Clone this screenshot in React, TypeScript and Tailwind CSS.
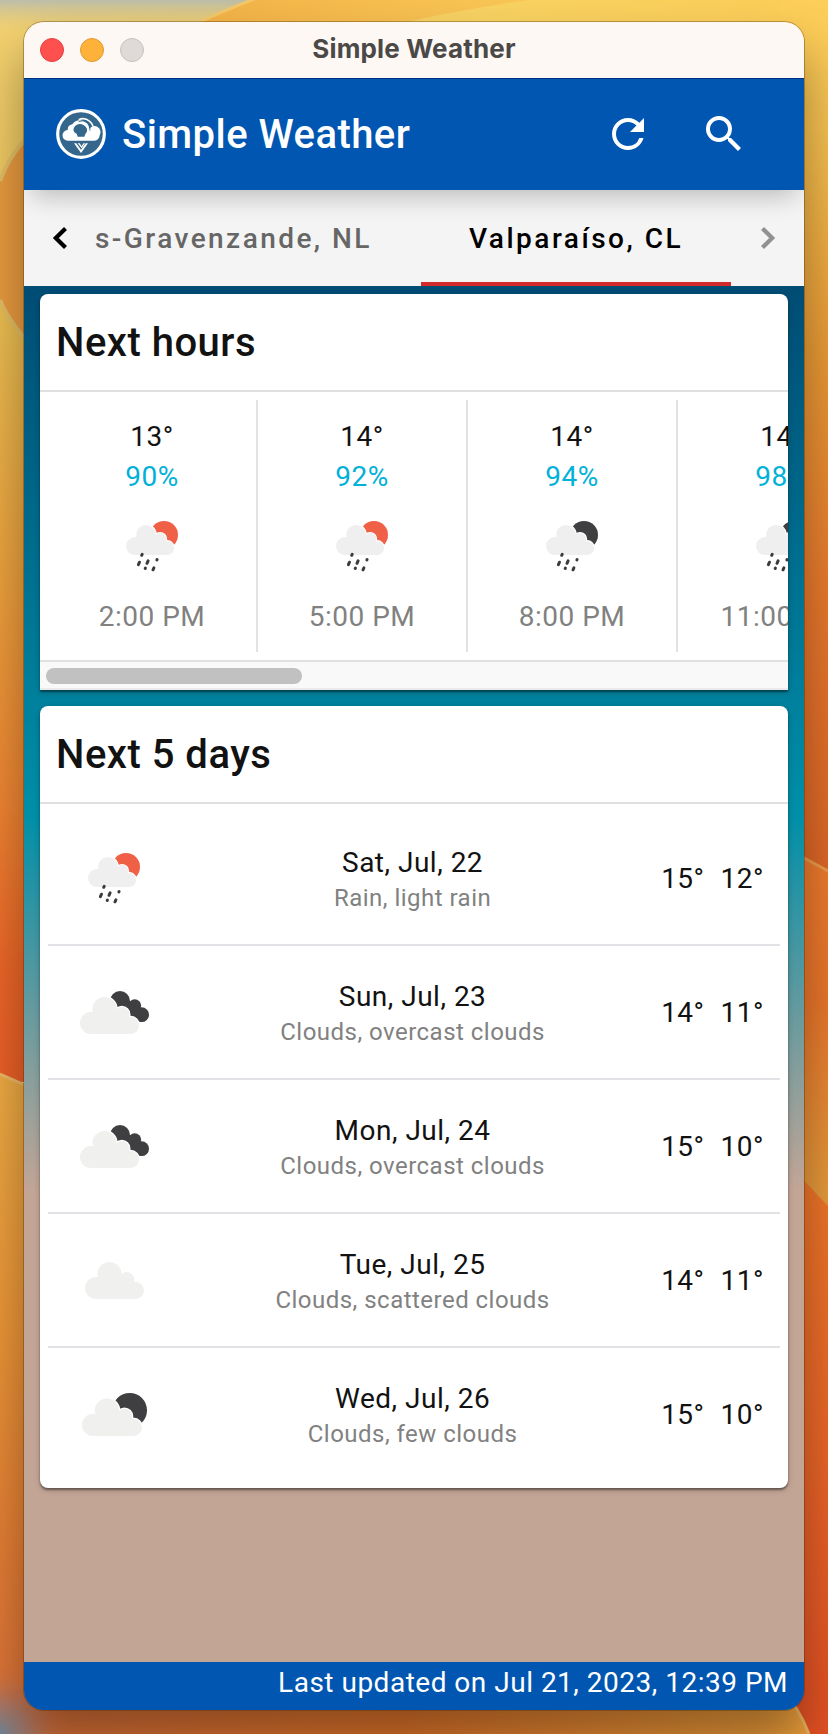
import React from "react";
import { MdRefresh, MdSearch } from "react-icons/md";

type IconKind = "rain-day" | "rain-night" | "overcast" | "scattered" | "few-night";

const CLOUD = [
  "M16 61a11 11 0 1 0 22 0a11 11 0 1 0 -22 0Z",
  "M28.5 47a12 12 0 1 0 24 0a12 12 0 1 0 -24 0Z",
  "M50.3 52.5a7.5 7.5 0 1 0 15 0a7.5 7.5 0 1 0 -15 0Z",
  "M58 63.5a8.5 8.5 0 1 0 17 0a8.5 8.5 0 1 0 -17 0Z",
  "M27 72L66.5 72L65 54L50 47L29 51Z",
].join("");

function WeatherIcon({ kind }: { kind: IconKind }) {
  const dark = "#3f3f41";
  return (
    <svg className="size-[100px] shrink-0" viewBox="0 0 100 100">
      {(kind === "rain-day" || kind === "rain-night") && (
        <>
          <circle cx="62" cy="39" r="14" fill={kind === "rain-day" ? "#ef6046" : dark} />
          <path
            d={CLOUD}
            transform="translate(11 0.4) scale(0.814)"
            fill="#efefef"
            stroke="#fff"
            strokeWidth="2.6"
            paintOrder="stroke"
          />
          <g stroke="#3b3b3b" strokeWidth="3" strokeLinecap="round">
            <path d="M39.7 59.3l.5-1" />
            <path d="M36.4 68.6l1.1-2.4" />
            <path d="M45 67.3l1.1-2.4" />
            <path d="M54.9 63.9l.2-.4" />
            <path d="M43.2 72.5l.2-.4" />
            <path d="M51 73.8l.9-1.9" />
          </g>
        </>
      )}
      {kind === "overcast" && (
        <>
          <g fill={dark}>
            <circle cx="56" cy="39" r="10" />
            <circle cx="70.7" cy="43.8" r="6.5" />
            <circle cx="77.6" cy="52.7" r="7.4" />
            <path d="M56 40L66 39L76 46L77 60L60 58Z" />
          </g>
          <path d={CLOUD} fill="#f0f0ee" stroke="#fff" strokeWidth="2.4" paintOrder="stroke" />
        </>
      )}
      {kind === "scattered" && <path d={CLOUD} transform="translate(5 -3)" fill="#f0f0ee" />}
      {kind === "few-night" && (
        <>
          <circle cx="65.7" cy="46.3" r="17.3" fill={dark} />
          <path
            d={CLOUD}
            transform="translate(1.8 -1) scale(1.015)"
            fill="#f0f0ee"
            stroke="#fff"
            strokeWidth="2.4"
            paintOrder="stroke"
          />
        </>
      )}
    </svg>
  );
}

function Logo() {
  return (
    <svg className="-mt-px size-[50px] shrink-0" viewBox="168 327 150 150">
      <circle cx="243" cy="402" r="70" fill="#35678c" stroke="#fff" strokeWidth="9.5" />
      <path d="M236 359A31 31 0 0 1 279 394" fill="none" stroke="#fff" strokeWidth="4.5" />
      <path
        d="M204 422a16 16 0 0 1-1-32a17 17 0 0 1 14-17a28 28 0 0 1 51 14a16 16 0 0 1 31 19a16 16 0 0 1-16 16Z"
        fill="#fff"
      />
      <path d="M236 365A24 24 0 0 1 270 392" fill="none" stroke="#35678c" strokeWidth="2.5" />
      <path d="M233 410l-3-9a12 12 0 0 1-8-18a21 21 0 0 1 36-1a14 14 0 0 1-2 20l-3 8Z" fill="#35678c" />
      <path d="M222 430h7l14 19l14-19h7l-21 29Z" fill="#fff" />
      <path d="M233 430h6l6 9l5-9h5l-10 15Z" fill="#fff" />
    </svg>
  );
}

function Wallpaper() {
  return (
    <svg className="absolute inset-0 size-full" viewBox="0 0 828 1734" preserveAspectRatio="none">
      <defs>
        <linearGradient id="top" x1="0" y1="0" x2="1" y2="0">
          <stop offset="0" stopColor="#f3d373" />
          <stop offset="0.3" stopColor="#f3cd68" />
          <stop offset="0.6" stopColor="#f8d261" />
          <stop offset="1" stopColor="#fccd58" />
        </linearGradient>
        <linearGradient id="haze" x1="0" y1="0" x2="0" y2="1">
          <stop offset="0" stopColor="#b9bdae" stopOpacity="0.95" />
          <stop offset="1" stopColor="#e6cc7c" stopOpacity="0" />
        </linearGradient>
        <linearGradient id="topBand" x1="0" y1="0" x2="1" y2="0">
          <stop offset="0" stopColor="#f2b247" />
          <stop offset="1" stopColor="#fac957" />
        </linearGradient>
        <linearGradient id="left" x1="0" y1="0" x2="0" y2="1074" gradientUnits="userSpaceOnUse">
          <stop offset="0" stopColor="#f3d373" />
          <stop offset="0.3" stopColor="#eabd51" />
          <stop offset="0.55" stopColor="#ec9f3c" />
          <stop offset="0.75" stopColor="#ee8432" />
          <stop offset="0.9" stopColor="#ec6628" />
          <stop offset="1" stopColor="#ea5f27" />
        </linearGradient>
        <linearGradient id="leftLow" x1="0" y1="1074" x2="0" y2="1734" gradientUnits="userSpaceOnUse">
          <stop offset="0" stopColor="#edaa43" />
          <stop offset="0.4" stopColor="#eb9437" />
          <stop offset="0.75" stopColor="#e27b34" />
          <stop offset="1" stopColor="#d9703a" />
        </linearGradient>
        <linearGradient id="right" x1="0" y1="0" x2="0" y2="870" gradientUnits="userSpaceOnUse">
          <stop offset="0" stopColor="#fdcf5a" />
          <stop offset="0.15" stopColor="#f5c050" />
          <stop offset="0.4" stopColor="#e99b35" />
          <stop offset="0.7" stopColor="#e8772c" />
          <stop offset="1" stopColor="#dd6626" />
        </linearGradient>
        <linearGradient id="rightMid" x1="0" y1="860" x2="0" y2="1205" gradientUnits="userSpaceOnUse">
          <stop offset="0" stopColor="#ee7a2d" />
          <stop offset="0.4" stopColor="#e9752b" />
          <stop offset="1" stopColor="#e59c3b" />
        </linearGradient>
        <linearGradient id="rightLow" x1="0" y1="1180" x2="0" y2="1734" gradientUnits="userSpaceOnUse">
          <stop offset="0" stopColor="#ee7529" />
          <stop offset="0.5" stopColor="#ea6528" />
          <stop offset="1" stopColor="#e24f23" />
        </linearGradient>
        <linearGradient id="bottom" x1="0" y1="0" x2="1" y2="0">
          <stop offset="0" stopColor="#d9703a" />
          <stop offset="0.5" stopColor="#df742a" />
          <stop offset="1" stopColor="#eb9f3b" />
        </linearGradient>
        <radialGradient id="corner" cx="0" cy="1734" r="70" gradientUnits="userSpaceOnUse">
          <stop offset="0" stopColor="#6f8597" />
          <stop offset="0.4" stopColor="#957c7c" stopOpacity="0.7" />
          <stop offset="1" stopColor="#d9703a" stopOpacity="0" />
        </radialGradient>
      </defs>
      <rect width="828" height="60" fill="url(#top)" />
      <rect y="0" width="50" height="1082" fill="url(#left)" />
      <rect width="300" height="34" fill="url(#haze)" />
      <path d="M195 26Q230 8 262 -4H560Q430 12 340 40H195Z" fill="url(#topBand)" />
      <path d="M195 24Q230 8 262 -4" fill="none" stroke="#f4c768" strokeWidth="3" />
      <path d="M50 120Q14 142 0 181V300Q12 326 50 362Z" fill="#e89a3f" />
      <path d="M50 120Q14 142 0 181M0 300Q10 326 50 366" fill="none" stroke="#e2bd64" strokeWidth="4" />
      <path d="M0 1074L50 1096V1734H0Z" fill="url(#leftLow)" />
      <path d="M0 1074L50 1096" stroke="#eeb765" strokeWidth="3" />
      <rect x="780" width="48" height="900" fill="url(#right)" />
      <path d="M780 844L828 870V1240H780Z" fill="url(#rightMid)" />
      <path d="M780 845L828 871" stroke="#ec9a4b" strokeWidth="3" />
      <path d="M780 1155L828 1206V1734H780Z" fill="url(#rightLow)" />
      <path d="M0 1690H782Q798 1706 809 1734H0Z" fill="url(#bottom)" />
      <path d="M782 1690Q798 1706 809 1734" fill="none" stroke="#edb25e" strokeWidth="3" />
      <rect y="1660" width="80" height="74" fill="url(#corner)" />
    </svg>
  );
}

const hours: { temp: string; humidity: string; icon: IconKind; time: string }[] = [
  { temp: "13°", humidity: "90%", icon: "rain-day", time: "2:00 PM" },
  { temp: "14°", humidity: "92%", icon: "rain-day", time: "5:00 PM" },
  { temp: "14°", humidity: "94%", icon: "rain-night", time: "8:00 PM" },
  { temp: "14°", humidity: "98%", icon: "rain-night", time: "11:00 PM" },
];

const days: { date: string; text: string; icon: IconKind; max: string; min: string }[] = [
  { date: "Sat, Jul, 22", text: "Rain, light rain", icon: "rain-day", max: "15°", min: "12°" },
  { date: "Sun, Jul, 23", text: "Clouds, overcast clouds", icon: "overcast", max: "14°", min: "11°" },
  { date: "Mon, Jul, 24", text: "Clouds, overcast clouds", icon: "overcast", max: "15°", min: "10°" },
  { date: "Tue, Jul, 25", text: "Clouds, scattered clouds", icon: "scattered", max: "14°", min: "11°" },
  { date: "Wed, Jul, 26", text: "Clouds, few clouds", icon: "few-night", max: "15°", min: "10°" },
];

function TitleBar() {
  return (
    <div className="flex h-14 shrink-0 items-center bg-[#fef8f4] px-4">
      <div className="flex w-[104px] gap-4">
        <span className="size-6 rounded-full border border-[#e2413f] bg-[#ff5050]" />
        <span className="size-6 rounded-full border border-[#e0992f] bg-[#ffb23a]" />
        <span className="size-6 rounded-full border border-[#c5c1be] bg-[#dfdad7]" />
      </div>
      <div className="flex-1 pb-1 text-center font-[Inter,sans-serif] text-[26px] font-bold tracking-[0.15px] text-[#4b4947]">
        Simple Weather
      </div>
      <div className="w-[104px]" />
    </div>
  );
}

function AppBar() {
  return (
    <header className="relative z-10 flex h-28 shrink-0 items-center border-t border-[#00307f] bg-[#0056b0] pr-14 pl-8 text-white shadow-[0_14px_24px_-8px_rgba(0,0,0,0.24)]">
      <Logo />
      <h1 className="ml-4 flex-1 text-[40px] font-medium tracking-[0.45px]">Simple Weather</h1>
      <div className="-mt-px flex gap-12">
        <MdRefresh className="size-12" />
        <MdSearch className="size-12" />
      </div>
    </header>
  );
}

function Tabs() {
  return (
    <nav className="flex h-24 shrink-0 bg-[#f4f4f4] text-[28px] font-medium tracking-[2.5px]">
      <div className="flex w-[71px] items-center justify-center">
        <svg className="size-6" viewBox="0 0 24 24" fill="none" stroke="#000" strokeWidth="4.2">
          <path d="M17.5 2.5L7.8 12L17.5 21.5" />
        </svg>
      </div>
      <div className="flex w-[326px] items-center pt-0.5 tracking-[2.44px] whitespace-nowrap text-[#666]">
        s-Gravenzande, NL
      </div>
      <div className="flex w-[310px] items-center justify-center border-b-4 border-[#d32a2c] pt-1.5 whitespace-nowrap text-black">
        Valparaíso, CL
      </div>
      <div className="flex w-[73px] items-center justify-center">
        <svg className="size-6" viewBox="0 0 24 24" fill="none" stroke="#919191" strokeWidth="4.2">
          <path d="M6.5 2.5L16.2 12L6.5 21.5" />
        </svg>
      </div>
    </nav>
  );
}

const cardShadow = "shadow-[0_2px_2px_rgba(0,0,0,0.4),0_2px_6px_rgba(0,0,0,0.2)]";

function HourlyCard() {
  return (
    <section className={`flex h-[396px] flex-col overflow-hidden rounded-t-lg bg-white ${cardShadow}`}>
      <h2 className="flex h-[98px] shrink-0 items-center border-b-2 border-[#e0e0e0] px-4 pt-0.5 text-[40px] font-medium tracking-[0.5px]">
        Next hours
      </h2>
      <div className="flex h-[270px] shrink-0 overflow-hidden border-b-2 border-[#e0e0e0] p-2">
        {hours.map((h) => (
          <div
            key={h.time}
            className="flex w-[210px] shrink-0 flex-col items-center border-r-2 border-[#e1e1e6] pt-[17px] text-[28px] leading-10 tracking-[0.5px]"
          >
            <div>{h.temp}</div>
            <div className="text-[#00b1d8]">{h.humidity}</div>
            <div className="-mt-px mb-px">
              <WeatherIcon kind={h.icon} />
            </div>
            <div className="text-[#818181]">{h.time}</div>
          </div>
        ))}
      </div>
      <div className="h-7 border-b-2 border-[#ebebeb] bg-[#f9f9f9] px-1.5 pt-1.5">
        <div className="h-4 w-64 rounded-full bg-[#c1c1c1]" />
      </div>
    </section>
  );
}

function DailyCard() {
  return (
    <section className={`mt-4 rounded-lg bg-white pb-2 ${cardShadow}`}>
      <h2 className="flex h-[98px] items-center border-b-2 border-[#e0e0e0] px-4 pt-0.5 text-[40px] font-medium tracking-[0.5px]">
        Next 5 days
      </h2>
      <div className="px-2 pt-2">
        {days.map((d) => (
          <div
            key={d.date}
            className="flex h-[134px] items-center border-b-2 border-[#e1e1e6] px-4 last:h-[132px] last:border-b-0"
          >
            <WeatherIcon kind={d.icon} />
            <div className="flex-1 pb-px text-center">
              <div className="pt-px text-[28px] leading-[39px] tracking-[0.5px]">{d.date}</div>
              <div className="text-2xl leading-8 tracking-[0.48px] text-[#818181]">{d.text}</div>
            </div>
            <div className="flex gap-4 pt-0.5 text-[28px] leading-10 tracking-[0.5px]">
              <span>{d.max}</span>
              <span>{d.min}</span>
            </div>
          </div>
        ))}
      </div>
    </section>
  );
}

export default function App() {
  return (
    <div className="relative h-[1734px] w-[828px] overflow-hidden px-6 pt-[22px] font-[Roboto,sans-serif] text-[#121212]">
      <Wallpaper />
      <div className="relative h-[1688px] w-[780px] rounded-[20px] shadow-[0_0_0_1px_rgba(80,40,0,0.35),0_30px_50px_rgba(0,0,0,0.36)]">
        <div className="flex h-full flex-col overflow-hidden rounded-[20px]">
          <TitleBar />
          <AppBar />
          <Tabs />
          <main className="flex-1 bg-[linear-gradient(180deg,#004c74_0px,#008fa8_530px,#c3a596_905px)] px-4 pt-2">
            <HourlyCard />
            <DailyCard />
          </main>
          <footer className="h-12 shrink-0 bg-[#0056b0] px-4 pt-px text-right text-[28px] leading-10 tracking-[0.5px] text-white">
            Last updated on Jul 21, 2023, 12:39 PM
          </footer>
        </div>
      </div>
    </div>
  );
}
